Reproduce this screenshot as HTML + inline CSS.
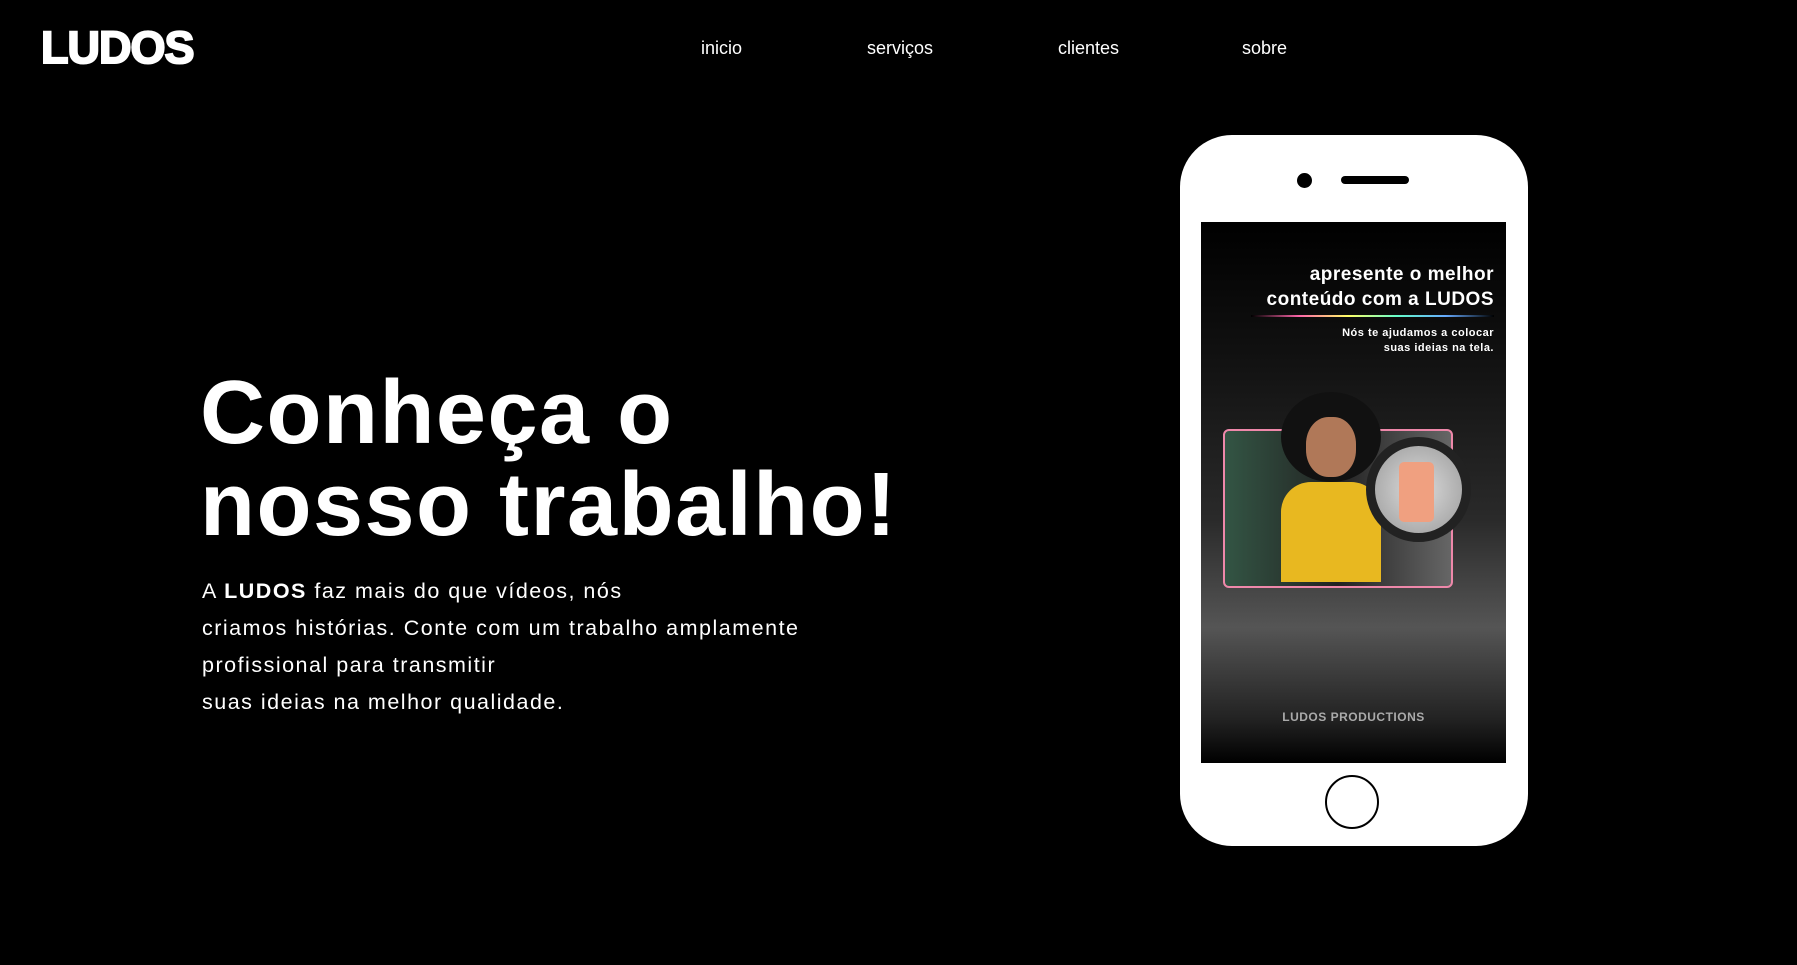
<!DOCTYPE html>
<html><head><meta charset="utf-8"><style>
html,body{margin:0;padding:0;background:#000;width:1797px;height:965px;overflow:hidden;font-family:"Liberation Sans",sans-serif;color:#fff}
.logo{position:absolute;left:41px;top:22px;font-weight:900;font-size:45px;letter-spacing:-1px;-webkit-text-stroke:2px #fff;transform:scaleX(1.0);transform-origin:left}
.nav a{position:absolute;top:38px;font-size:18px;color:#fff;text-decoration:none}
h1{position:absolute;left:200px;top:367px;margin:0;font-size:90px;line-height:92px;font-weight:700;letter-spacing:1.5px}
p{position:absolute;left:202px;top:573px;margin:0;font-size:21.5px;line-height:37px;letter-spacing:1.5px}
.phone{position:absolute;left:1180px;top:135px;width:348px;height:711px;background:#fff;border-radius:52px}
.dot{position:absolute;left:117px;top:38px;width:15px;height:15px;border-radius:50%;background:#000}
.bar{position:absolute;left:161px;top:41px;width:68px;height:8px;border-radius:4px;background:#000}
.screen{position:absolute;left:21px;top:87px;width:305px;height:541px;background:linear-gradient(#000 0%,#111 25%,#2a2a2a 55%,#555 75%,#222 92%,#000 100%);overflow:hidden}
.home{position:absolute;left:145px;top:640px;width:54px;height:54px;border-radius:50%;border:2px solid #000;box-sizing:border-box}
.t1{position:absolute;right:12px;top:40px;text-align:right;font-weight:700;font-size:19px;line-height:25px;letter-spacing:0.5px}
.line{position:absolute;left:50px;right:12px;top:93px;height:2px;background:linear-gradient(90deg,#000,#f6a,#ff6,#6fc,#6af,#000)}
.t2{position:absolute;right:12px;top:104px;text-align:right;font-weight:700;font-size:11px;line-height:15px;letter-spacing:0.5px}
.frame{position:absolute;left:22px;top:207px;width:226px;height:155px;border:2px solid #e8a;border-radius:6px;background:linear-gradient(90deg,#354,#222 50%,#666)}
.hair{position:absolute;left:80px;top:170px;width:100px;height:90px;border-radius:50%;background:#111}
.face{position:absolute;left:105px;top:195px;width:50px;height:60px;border-radius:45%;background:#b07858}
.shirt{position:absolute;left:80px;top:260px;width:100px;height:100px;border-radius:30px 30px 0 0;background:#e8b820}
.ring{position:absolute;left:165px;top:215px;width:105px;height:105px;border-radius:50%;border:9px solid #222;box-sizing:border-box;background:radial-gradient(#ddd,#999)}
.ph{position:absolute;left:198px;top:240px;width:35px;height:60px;background:#f0a080;border-radius:5px}
.bot{position:absolute;left:0;right:0;top:488px;text-align:center;font-weight:900;font-size:12px;color:#aaa;letter-spacing:0.5px}
</style></head><body>
<div class="logo">LUDOS</div>
<div class="nav"><a style="left:701px">inicio</a><a style="left:867px">serviços</a><a style="left:1058px">clientes</a><a style="left:1242px">sobre</a></div>
<h1>Conheça o<br>nosso trabalho!</h1>
<p>A <b>LUDOS</b> faz mais do que vídeos, nós<br>criamos histórias. Conte com um trabalho amplamente<br>profissional para transmitir<br>suas ideias na melhor qualidade.</p>
<div class="phone"><div class="dot"></div><div class="bar"></div>
<div class="screen">
<div class="t1">apresente o melhor<br>conteúdo com a <b style="font-weight:900">LUDOS</b></div>
<div class="line"></div>
<div class="t2">Nós te ajudamos a colocar<br>suas ideias na tela.</div>
<div class="frame"></div>
<div class="hair"></div><div class="shirt"></div><div class="face"></div>
<div class="ring"></div><div class="ph"></div>
<div class="bot">LUDOS PRODUCTIONS</div>
</div>
<div class="home"></div></div>
</body></html>
